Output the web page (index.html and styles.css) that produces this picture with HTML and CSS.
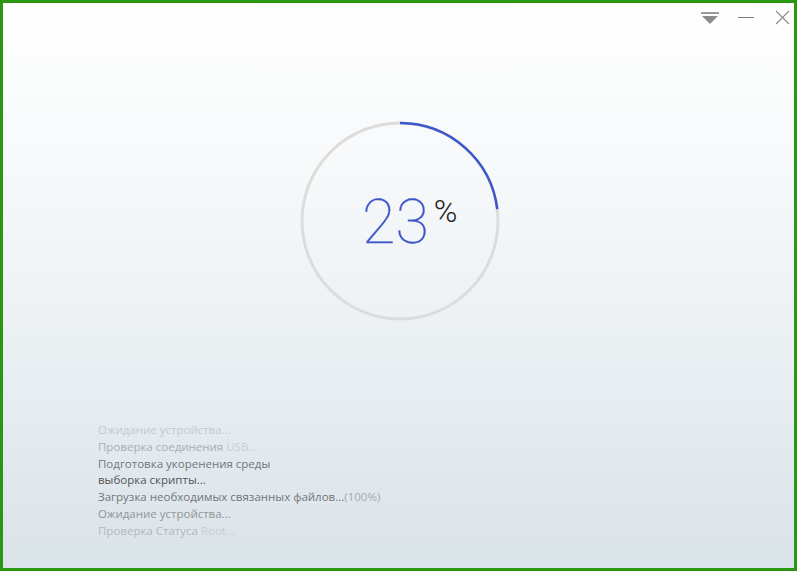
FILE: index.html
```html
<!DOCTYPE html>
<html lang="ru">
<head>
<meta charset="utf-8">
<title>Root</title>
<link rel="stylesheet" href="styles.css">
</head>
<body>
<div class="window">
  <div class="titlebar">
    <svg class="ctl ctl-menu" width="22" height="24" viewBox="0 0 22 24">
      <rect x="2" y="9" width="18" height="2" fill="#9a9a9a"/>
      <polygon points="3,13 19,13 11,21" fill="#8c8c8c"/>
    </svg>
    <svg class="ctl ctl-min" width="22" height="24" viewBox="0 0 22 24">
      <line x1="3" y1="14.5" x2="19" y2="14.5" stroke="#7a7a7a" stroke-width="1"/>
    </svg>
    <svg class="ctl ctl-close" width="20" height="24" viewBox="0 0 20 24">
      <line x1="4" y1="8" x2="17" y2="21" stroke="#8a8a8a" stroke-width="1.1"/>
      <line x1="17" y1="8" x2="4" y2="21" stroke="#8a8a8a" stroke-width="1.1"/>
    </svg>
  </div>

  <div class="ring">
    <svg class="ring-svg" width="200" height="200" viewBox="0 0 200 200">
      <circle cx="100" cy="100" r="98" fill="none" stroke="#dcdcdc" stroke-width="3"/>
      <circle cx="100" cy="100" r="98" fill="none" stroke="#3d56c9" stroke-width="2.5"
              stroke-dasharray="141.6 615.8" transform="rotate(-90 100 100)"/>
    </svg>
    <div class="value">
      <span class="num">23</span><span class="pct">%</span>
    </div>
  </div>

  <ul class="log">
    <li class="c1">Ожидание устройства...</li>
    <li class="c2">Проверка соединения <span class="dim">USB...</span></li>
    <li class="c3">Подготовка укоренения среды</li>
    <li class="c4">выборка скрипты...</li>
    <li class="c3">Загрузка необходимых связанных файлов...<span class="dim2">(100%)</span></li>
    <li class="c5">Ожидание устройства...</li>
    <li class="c6">Проверка Статуса <span class="dim">Root...</span></li>
  </ul>
</div>
</body>
</html>
```

FILE: styles.css
```css
html, body {
  margin: 0;
  padding: 0;
}

body {
  width: 797px;
  height: 571px;
  overflow: hidden;
  font-family: "Open Sans", "Noto Sans", sans-serif;
}

.window {
  box-sizing: border-box;
  width: 797px;
  height: 571px;
  border: 3px solid #2a9612;
  background: linear-gradient(to bottom, #ffffff 0%, #f3f6f8 40%, #dae3e9 100%);
  display: flex;
  flex-direction: column;
}

.titlebar {
  display: flex;
  justify-content: flex-end;
  align-items: flex-start;
  height: 24px;
  padding-right: 2px;
}

.ctl {
  display: block;
}

.ctl-min {
  margin-left: 14px;
}

.ctl-close {
  margin-left: 15px;
}

.ring {
  display: grid;
  align-self: flex-start;
  margin-top: 94px;
  margin-left: 297px;
  width: 200px;
  height: 200px;
}

.ring-svg,
.value {
  grid-area: 1 / 1;
}

.ring-svg {
  display: block;
}

.value {
  display: flex;
  align-items: flex-start;
  padding-left: 62px;
  font-family: Roboto, "Liberation Sans", sans-serif;
}

.num {
  margin-top: 71px;
  font-size: 61px;
  line-height: 60px;
  font-weight: 100;
  color: #3d56c9;
  -webkit-text-stroke: 0.3px #3d56c9;
}

.pct {
  margin-top: 74px;
  margin-left: 5px;
  font-size: 32px;
  line-height: 32px;
  font-weight: 300;
  color: #222;
}

.log {
  list-style: none;
  margin: 101px 0 0 95px;
  padding: 0;
  font-size: 11.5px;
  line-height: 16.8px;
}

.c1 { color: #c4c9cd; }
.c2 { color: #a9adb1; }
.c3 { color: #737679; }
.c4 { color: #525456; }
.c5 { color: #929598; }
.c6 { color: #b3b7bb; }

.dim { color: #c9cdd1; }
.dim2 { color: #a6a9ac; }
```
